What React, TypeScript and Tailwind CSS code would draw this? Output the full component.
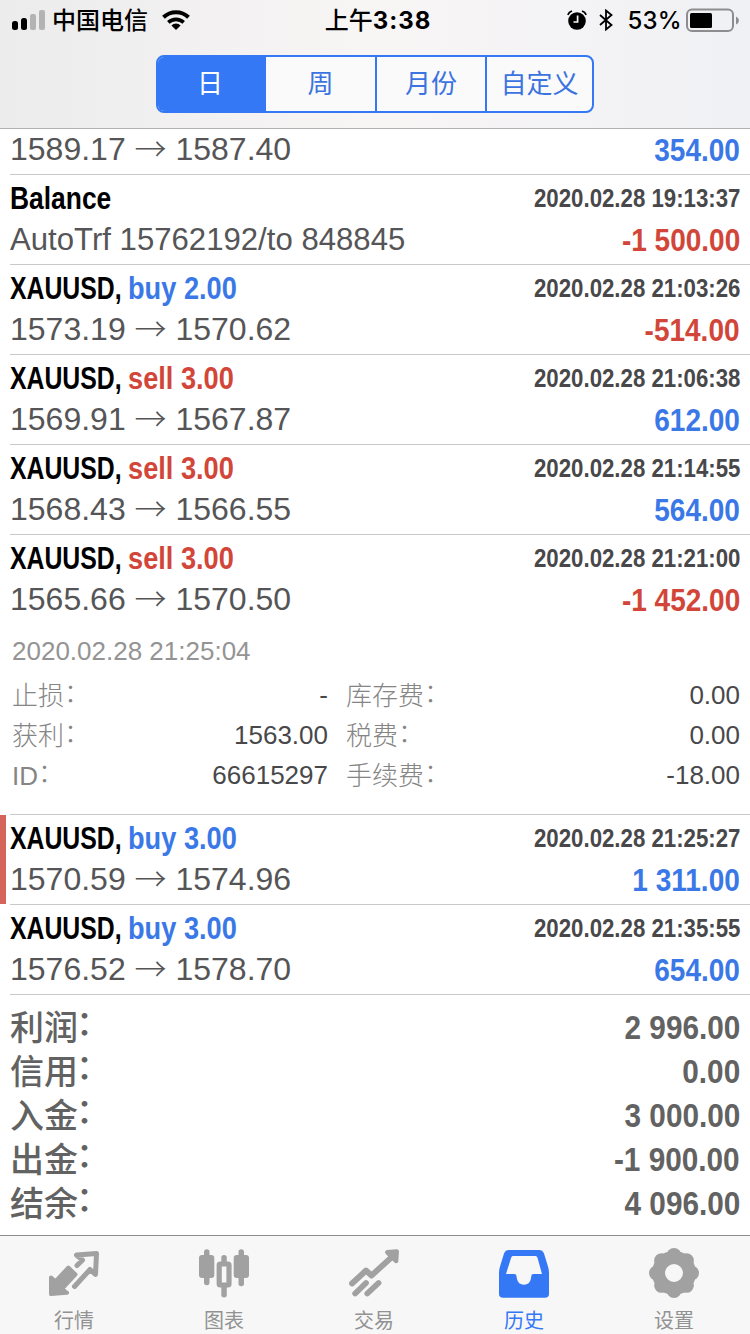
import React from "react";

type Deal = {
  symbol: string;
  side?: string;
  volume?: string;
  time: string;
  note: string;
  profit: string;
  marked?: boolean;
  details?: boolean;
};

const deals: Deal[] = [
  { symbol: "Balance", time: "2020.02.28 19:13:37", note: "AutoTrf 15762192/to 848845", profit: "-1 500.00" },
  { symbol: "XAUUSD,", side: "buy", volume: "2.00", time: "2020.02.28 21:03:26", note: "1573.19 → 1570.62", profit: "-514.00" },
  { symbol: "XAUUSD,", side: "sell", volume: "3.00", time: "2020.02.28 21:06:38", note: "1569.91 → 1567.87", profit: "612.00" },
  { symbol: "XAUUSD,", side: "sell", volume: "3.00", time: "2020.02.28 21:14:55", note: "1568.43 → 1566.55", profit: "564.00" },
  { symbol: "XAUUSD,", side: "sell", volume: "3.00", time: "2020.02.28 21:21:00", note: "1565.66 → 1570.50", profit: "-1 452.00", details: true },
  { symbol: "XAUUSD,", side: "buy", volume: "3.00", time: "2020.02.28 21:25:27", note: "1570.59 → 1574.96", profit: "1 311.00", marked: true },
  { symbol: "XAUUSD,", side: "buy", volume: "3.00", time: "2020.02.28 21:35:55", note: "1576.52 → 1578.70", profit: "654.00" },
];

const totals = [
  ["利润", "2 996.00"],
  ["信用", "0.00"],
  ["入金", "3 000.00"],
  ["出金", "-1 900.00"],
  ["结余", "4 096.00"],
];

const details = [
  ["止损", "-", "库存费", "0.00"],
  ["获利", "1563.00", "税费", "0.00"],
  ["ID", "66615297", "手续费", "-18.00"],
];

const StatusBar = () => (
  <div className="grid h-10 grid-cols-[1fr_auto_1fr] items-center pl-3 pr-[11px] text-[24px] leading-10 text-black font-[Inter,'Noto_Sans_CJK_SC',sans-serif]">
    <div className="flex items-center">
      <svg width="34" height="22" viewBox="0 0 34 22">
        <rect x="0" y="12" width="6" height="9" rx="2.5" />
        <rect x="9" y="9" width="6" height="12" rx="2.5" />
        <rect x="18" y="5" width="6" height="16" rx="2" fill="#b3b3b3" />
        <rect x="27" y="1" width="6" height="20" rx="2" fill="#b3b3b3" />
      </svg>
      <span className="relative top-px ml-[6px] font-medium">中国电信</span>
      <svg className="ml-[14px]" width="28" height="20" viewBox="0 0 28 20" fill="none" stroke="#000">
        <path d="M1.5 7.2a18 18 0 0 1 25 0" strokeWidth="4" />
        <path d="M6.3 12.4a11.3 11.3 0 0 1 15.4 0" strokeWidth="3.6" />
        <path d="M14 20l-4.6-4.6a6.6 6.6 0 0 1 9.2 0z" fill="#000" stroke="none" />
      </svg>
    </div>
    <div className="relative top-px pl-[5px] font-medium">
      上午<span className="font-bold tracking-[1px]">3:38</span>
    </div>
    <div className="flex items-center justify-end">
      <svg width="20" height="20" viewBox="0 0 20 20">
        <circle cx="10" cy="11" r="8.8" />
        <path d="M.8 4.8Q2 2 5 1M19.2 4.8Q18 2 15 1" fill="none" stroke="#000" strokeWidth="1.8" />
        <path d="M10.6 5.5v6.5H6.5" fill="none" stroke="#f7f7f7" strokeWidth="1.7" />
      </svg>
      <svg className="ml-3" width="14" height="22" viewBox="0 0 14 22" fill="none" stroke="#000" strokeWidth="1.8">
        <path d="M1 6l11.5 10-5.500 4.500v-19L12.500 6 1 16" />
      </svg>
      <span className="relative top-px ml-[14px] font-medium tracking-[0.3px]">53%</span>
      <svg className="ml-[4px]" width="53" height="24" viewBox="0 0 53 24">
        <rect x="1" y="1.500" width="46" height="21.500" rx="5" fill="none" stroke="#8d8d8f" strokeWidth="2" />
        <rect x="4" y="5" width="22" height="15" rx="1.500" />
        <path d="M50 8.500q3 1.500 3 4t-3 4z" fill="#8d8d8f" />
      </svg>
    </div>
  </div>
);

const Segments = () => (
  <div className="mx-auto mt-[15px] grid h-[58px] w-[438px] grid-cols-[108px_109px_110px_107px] overflow-hidden rounded-[8px] border-2 border-[#3478f6] bg-[#fafafa] text-center text-[26px] leading-[55px] text-[#3b73e0]">
    <div className="bg-[#3478f6] pr-1 text-white">日</div>
    <div>周</div>
    <div className="border-l-2 border-[#3478f6]">月份</div>
    <div className="border-l-2 border-[#3478f6]">自定义</div>
  </div>
);

const Note = ({ text }: { text: string }) => {
  const [open, close] = text.split("→");
  if (!close) {
    return <span className="origin-left scale-x-[0.973]">{text}</span>;
  }
  return (
    <span>
      {open}
      <span className="relative top-px font-light leading-none font-['Noto_Sans_CJK_SC',sans-serif]">→</span>
      {close}
    </span>
  );
};

const Profit = ({ value }: { value: string }) => (
  <span className={`relative top-px origin-right scale-x-[0.875] font-bold ${value.startsWith("-") ? "text-[#d2463a]" : "text-[#3b78e7]"}`}>
    {value}
  </span>
);

const DetailLabel = ({ text }: { text: string }) => (
  <span className="relative top-px font-light text-[#858585]">
    {text}
    <span className="relative -top-[3px]">：</span>
  </span>
);

const DealRow = ({ deal }: { deal: Deal }) => (
  <div className="flex">
    <div className={`w-[6px] ${deal.marked ? "mb-px bg-[#d5655a]" : ""}`} />
    <div className={`ml-1 flex-1 border-b border-[#c8c7cc] pr-[10px] pt-[2px] text-[32px] ${deal.details ? "h-[280px]" : "h-[90px]"}`}>
      <div className="flex h-[42px] items-center justify-between whitespace-nowrap font-bold leading-[42px]">
        {deal.side ? (
          <div className="flex">
            <span className="w-[118px] origin-left scale-x-[0.775] text-black">{deal.symbol}</span>
            <span className={`origin-left scale-x-[0.85] ${deal.side === "buy" ? "text-[#3b78e7]" : "text-[#d2463a]"}`}>
              {deal.side} {deal.volume}
            </span>
          </div>
        ) : (
          <span className="origin-left scale-x-[0.825] text-black">{deal.symbol}</span>
        )}
        <span className="origin-right scale-x-[0.855] text-[26px] text-[#48484a]">{deal.time}</span>
      </div>
      <div className="flex h-[41px] items-center justify-between whitespace-nowrap leading-[41px] text-[#555557]">
        <Note text={deal.note} />
        <Profit value={deal.profit} />
      </div>
      {deal.details && (
        <div className="pl-[2px] pt-[11px] text-[26px] leading-10 text-[#949494]">
          <div className="mb-1">2020.02.28 21:25:04</div>
          {details.map(([a, av, b, bv]) => (
            <div key={a} className="flex h-10">
              <DetailLabel text={a} />
              <span className="ml-auto text-[#48484a]">{av}</span>
              <div className="ml-[18px] flex w-[394px] justify-between">
                <DetailLabel text={b} />
                <span className="text-[#48484a]">{bv}</span>
              </div>
            </div>
          ))}
        </div>
      )}
    </div>
  </div>
);

const QuotesIcon = () => (
  <svg width="50" height="50" viewBox="0 0 50 50" fill="none" stroke="currentColor" strokeWidth="5" strokeLinecap="round" strokeLinejoin="round">
    <path d="M28 17.500l5.500-5.500-6-5 20-1.500L46.500 26.500l-5.500-5L25.500 38.500" />
    <path d="M2 29.500l4.500 3.800L19.300 19.500l7.200 7L13 41l5 3.800L2 46z" fill="currentColor" strokeWidth="4" />
  </svg>
);

const ChartIcon = () => (
  <svg width="50" height="50" viewBox="0 0 50 50" fill="currentColor">
    <rect x="0" y="7" width="15.300" height="23" rx="3" />
    <rect x="5" y="1.300" width="5.500" height="36" rx="2.700" />
    <rect x="34.700" y="7" width="15.300" height="23" rx="3" />
    <rect x="39.500" y="1.300" width="5.500" height="37" rx="2.700" />
    <rect x="20.200" y="16" width="9.800" height="21" rx="1" fill="none" stroke="currentColor" strokeWidth="5.200" />
    <rect x="22.300" y="7" width="5.500" height="10" rx="2.700" />
    <rect x="22.300" y="36" width="5.500" height="13.500" rx="2.700" />
  </svg>
);

const TradeIcon = () => (
  <svg width="50" height="50" viewBox="0 0 50 50" fill="none" stroke="currentColor" strokeWidth="5.800" strokeLinecap="round" strokeLinejoin="round">
    <path d="M3 35.500l14-13 5.500 5L44 8M6.200 45.500l10.800-10.500M18.300 45.500l11.200-10.500" />
    <path d="M38.300 4.300l9.400-.8-.6 9.500z" fill="currentColor" strokeWidth="4.500" />
  </svg>
);

const HistoryIcon = () => (
  <svg width="50" height="50" viewBox="0 0 50 50" fill="currentColor">
    <path
      fillRule="evenodd"
      d="M10 2h30c2.500 0 4 1 5 3.500l4 13c.7 2.500 1 4.500 1 7V46c0 2.500-1.500 3.800-4 3.800H4c-2.500 0-4-1.300-4-3.800V25.500c0-2.500.3-4.500 1-7l4-13C6 3 7.500 2 10 2zM14.500 8c-1.300 0-2 .6-2.400 1.800L7 26h8.200c1.500 0 2.100.8 2.300 2.300.7 5.500 2.600 8.400 7.500 8.400s6.600-2.900 7.300-8.400c.2-1.500.8-2.300 2.300-2.300H43L38.500 9.800C38.100 8.600 37.400 8 36 8z"
    />
  </svg>
);

const SettingsIcon = () => (
  <svg width="50" height="50" viewBox="0 0 50 50" fill="currentColor">
    {[0, 45, 90, 135, 180, 225, 270, 315].map((angle) => (
      <circle key={angle} cx="25" cy="7.500" r="7.500" transform={`rotate(${angle} 25 25)`} />
    ))}
    <circle cx="25" cy="25" r="15.500" fill="none" stroke="currentColor" strokeWidth="13" />
  </svg>
);

const tabs = [
  { label: "行情", icon: <QuotesIcon /> },
  { label: "图表", icon: <ChartIcon /> },
  { label: "交易", icon: <TradeIcon /> },
  { label: "历史", icon: <HistoryIcon />, active: true },
  { label: "设置", icon: <SettingsIcon /> },
];

export default function App() {
  return (
    <div className="flex h-[1334px] w-[750px] flex-col overflow-hidden bg-white font-['Liberation_Sans','Noto_Sans_CJK_SC',sans-serif]">
      <header className="h-[129px] shrink-0 border-b border-[#b2b2b4] bg-linear-to-r from-[#ececec] via-[#f8f5f5] to-[#f0f1f5]">
        <StatusBar />
        <Segments />
      </header>

      <main className="flex-1">
        <div className="ml-[10px] flex h-[46px] justify-between border-b border-[#c8c7cc] pr-[10px] text-[32px] leading-[41px] text-[#555557]">
          <Note text="1589.17 → 1587.40" />
          <Profit value="354.00" />
        </div>
        {deals.map((deal) => (
          <DealRow key={deal.time} deal={deal} />
        ))}
        <div className="px-[10px] pt-[10px] text-[34px] leading-[44px] text-[#626262]">
          {totals.map(([label, value]) => (
            <div key={label} className="flex h-11 justify-between">
              <span className="relative top-px font-medium">
                {label}
                <span className="relative -left-[2px] -top-[5px]">：</span>
              </span>
              <span className="origin-right scale-x-[0.875] font-bold">{value}</span>
            </div>
          ))}
        </div>
      </main>

      <nav className="h-[99px] shrink-0 border-t border-[#8e8e90] bg-[#f7f7f7]">
        <div className="-ml-px grid w-[750px] grid-cols-5">
          {tabs.map((tab) => (
            <div key={tab.label} className={`flex flex-col items-center pt-3 ${tab.active ? "text-[#3478f6]" : "text-[#a1a1a1]"}`}>
              {tab.icon}
              <span className={`mt-[9px] text-[20px] leading-7 ${tab.active ? "text-[#3478f6]" : "text-[#929292]"}`}>{tab.label}</span>
            </div>
          ))}
        </div>
      </nav>
    </div>
  );
}
